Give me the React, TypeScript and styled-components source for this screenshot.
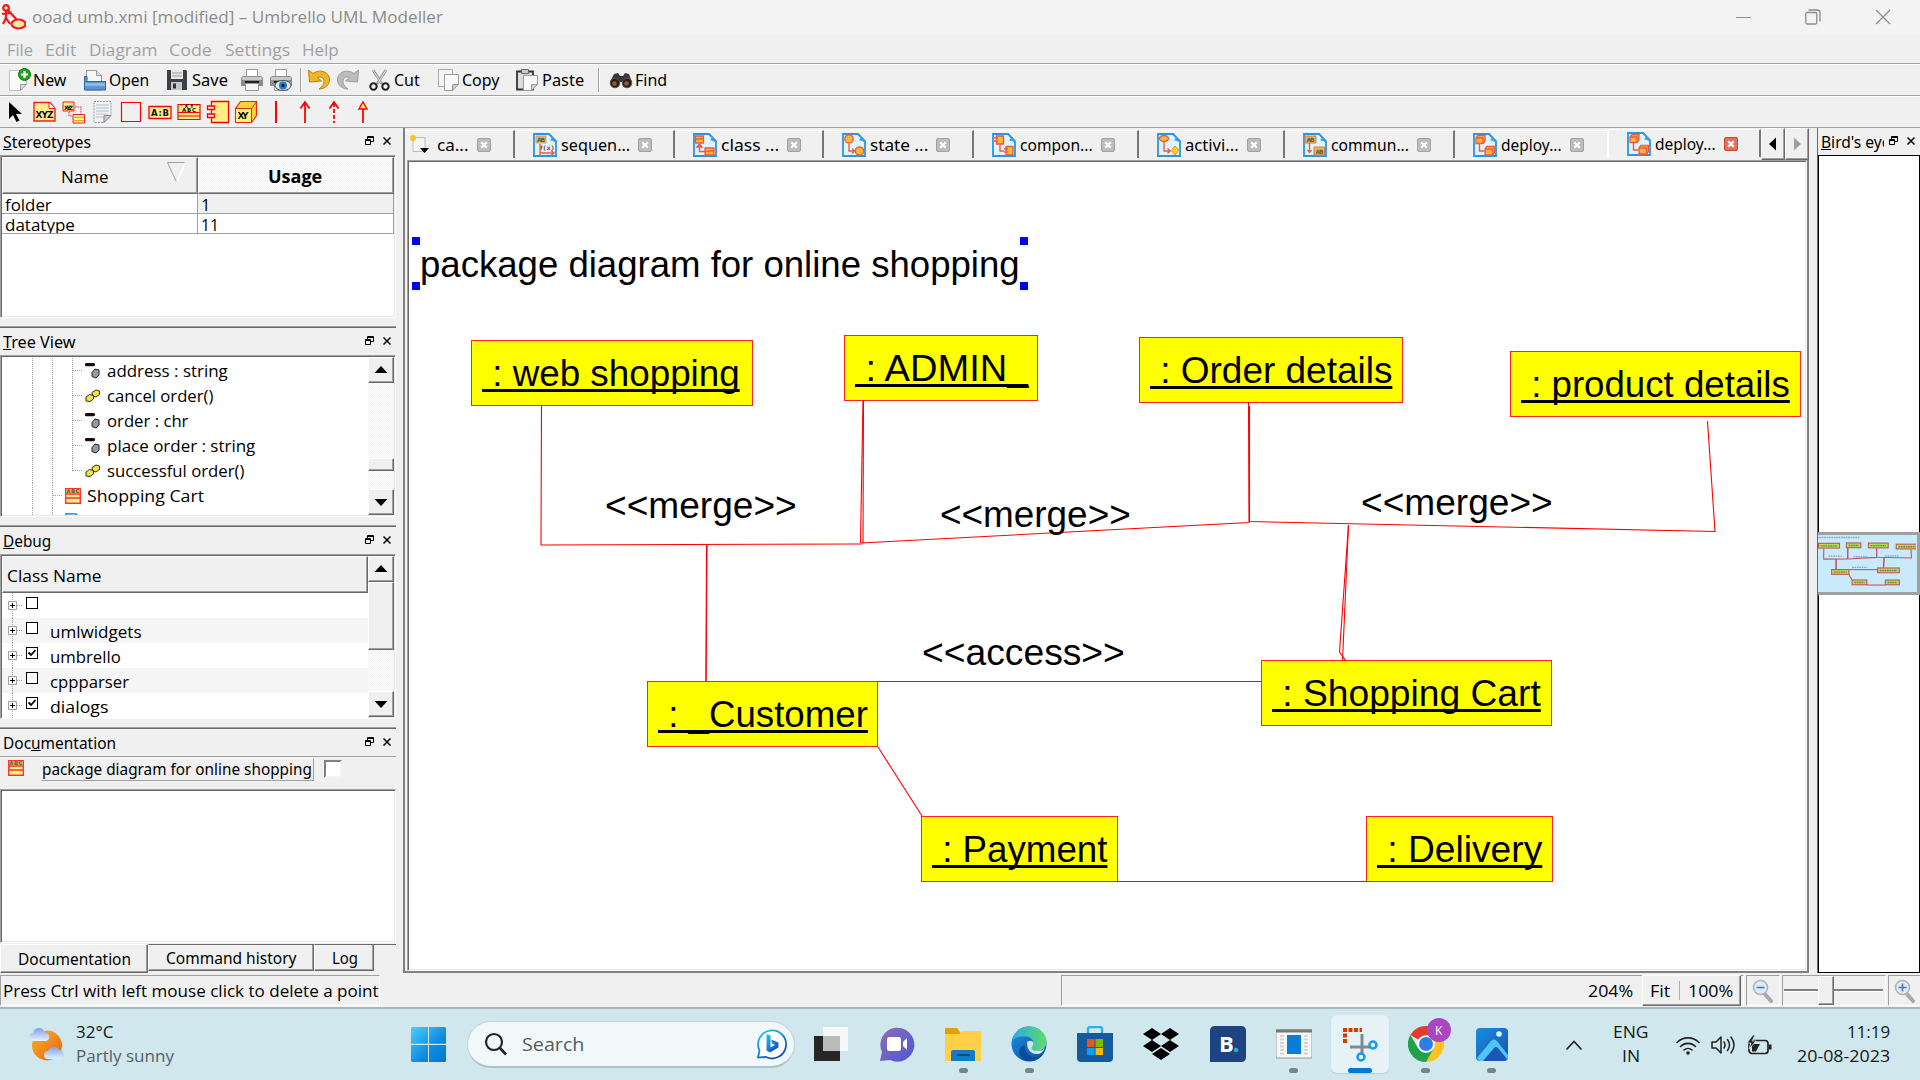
import React, { useLayoutEffect, useRef, useState } from 'react';
import styled, { createGlobalStyle, css } from 'styled-components';

const UI = '"Open Sans", "Noto Sans", sans-serif';
const TAHOMA = '"Noto Sans", "Open Sans", sans-serif';
const ARIAL = '"Liberation Sans", Arial, sans-serif';

const Global = createGlobalStyle`
  *, *::before, *::after { box-sizing: border-box; }
  html, body { margin: 0; padding: 0; overflow: hidden; }
  svg { display: block; flex: none; }
`;

/* ---------- text fitted to a known width ---------- */
const FitBox = styled.span<{ $w: number }>`
  display: block;
  flex: none;
  width: ${p => p.$w}px;
  white-space: pre;
`;
const FitInner = styled.span`
  display: inline-block;
  transform-origin: 0 50%;
  white-space: pre;
`;
function Fit({ w, children }: { w: number; children: React.ReactNode }) {
  const ref = useRef<HTMLSpanElement>(null);
  const [scale, setScale] = useState(1);
  useLayoutEffect(() => {
    if (ref.current) setScale(w / ref.current.offsetWidth);
  }, [w]);
  return (
    <FitBox $w={w}>
      <FitInner ref={ref} style={{ transform: `scaleX(${scale})` }}>{children}</FitInner>
    </FitBox>
  );
}

/* ---------- window frame ---------- */
const Screen = styled.div`
  width: 1920px;
  height: 1080px;
  display: flex;
  flex-direction: column;
  background: #f0f0f0;
  font-family: ${UI};
  font-size: 17px;
  color: #000;
  overflow: hidden;
`;
const TitleBar = styled.header`
  height: 34px;
  display: flex;
  align-items: center;
  background: #f3f3f3;
  color: #8c8c8c;
  padding-left: 2px;
`;
const TitleText = styled.div`
  margin-left: 6px;
  padding-bottom: 1px;
  flex: 1;
`;
const WindowButtons = styled.div`
  display: flex;
  gap: 54px;
  padding-right: 29px;
`;
const MenuBar = styled.nav`
  height: 30px;
  display: flex;
  align-items: center;
  gap: 12.4px;
  padding: 2px 0 0 7px;
  color: #a0a0a0;
  border-bottom: 1px solid #a0a0a0;
`;
const Toolbar = styled.div`
  height: 32px;
  display: flex;
  align-items: center;
  border-top: 1px solid #fff;
  border-bottom: 1px solid #a0a0a0;
  padding-left: 7px;
  font-family: ${TAHOMA};
  font-size: 16px;
`;
const ToolButton = styled.div<{ $gap?: number; $ml?: number }>`
  display: flex;
  align-items: center;
  gap: ${p => p.$gap ?? 4}px;
  margin-left: ${p => p.$ml ?? 0}px;
`;
const Separator = styled.div<{ $ml: number }>`
  width: 2px;
  height: 24px;
  margin-left: ${p => p.$ml}px;
  background: #a0a0a0;
  border-right: 1px solid #fff;
`;

/* ---------- docks ---------- */
const Workspace = styled.main`
  height: 845px;
  display: flex;
`;
const LeftColumn = styled.aside`
  width: 396px;
  display: flex;
  flex-direction: column;
`;
const Dock = styled.section<{ $h: number; $first?: boolean }>`
  height: ${p => p.$h}px;
  display: flex;
  flex-direction: column;
  ${p => !p.$first && css`
    border-top: 1px solid #a0a0a0;
    box-shadow: inset 0 1px #696969;
    padding-top: 1px;
  `}
`;
const DockTitleBar = styled.div`
  height: 27px;
  flex: none;
  display: flex;
  align-items: center;
  padding: 0 5px 0 3px;
  font-family: ${TAHOMA};
  font-size: 16px;
`;
const DockName = styled.div`
  flex: 1;
  min-width: 0;
  overflow: hidden;
`;
const DockControls = styled.div`
  display: flex;
  gap: 9px;
  margin: -2px 0 0 5px;
`;
const Sunken = styled.div<{ $h?: number }>`
  ${p => (p.$h ? `height: ${p.$h}px;` : 'flex: 1;')}
  background: #fff;
  border: 1px solid;
  border-color: #a0a0a0 #fff #fff #a0a0a0;
  box-shadow: inset 1px 1px #696969, inset -1px -1px #e8e8e8;
  padding: 1px;
  display: flex;
  overflow: hidden;
`;
const raised = css`
  background: #f0f0f0;
  border: 1px solid;
  border-color: #fff #696969 #696969 #fff;
  box-shadow: inset -1px -1px #a0a0a0;
`;
const HeaderCell = styled.div<{ $dither?: boolean }>`
  ${raised}
  height: 37px;
  display: flex;
  align-items: center;
  padding-top: 1px;
  ${p => p.$dither && 'background: repeating-conic-gradient(#fff 0 25%, #f0f0f0 0 50%) 0 0 / 2px 2px;'}
`;
const StereoTable = styled.div`
  width: 392px;
  height: 76px;
  display: grid;
  grid-template-columns: 196px 196px;
  grid-template-rows: 37px 20px 20px;
`;
const Cell = styled.div<{ $alt?: boolean }>`
  height: 20px;
  border-right: 1px solid #a0a0a0;
  border-bottom: 1px solid #a0a0a0;
  background: ${p => (p.$alt ? '#f0f0f0' : '#fff')};
  padding-left: 3px;
  line-height: 21px;
  overflow: hidden;
  font-size: 16.5px;
`;
const SortMark = styled.svg`
  margin-left: 58px;
  margin-top: -8px;
`;
const NameLabel = styled.div` margin-left: 58px; `;
const UsageLabel = styled.div` margin-left: 69px; font-weight: 700; font-family: ${UI}; `;

/* scroll bars */
const Track = styled.div`
  width: 26px;
  flex: none;
  display: flex;
  flex-direction: column;
  background: repeating-conic-gradient(#fff 0 25%, #f0f0f0 0 50%) 0 0 / 2px 2px;
`;
const ScrollButton = styled.div`
  ${raised}
  height: 26px;
  display: flex;
  align-items: center;
  justify-content: center;
`;
const Thumb = styled.div<{ $before: number; $h: number }>`
  ${raised}
  height: ${p => p.$h}px;
  margin-top: ${p => p.$before}px;
`;
const Spring = styled.div` flex: 1; `;

/* tree */
const Tree = styled.div`
  flex: 1;
  overflow: hidden;
  padding-top: 1px;
`;
const TreeRow = styled.div`
  height: 25px;
  display: flex;
  align-items: center;
`;
const Guide = styled.div<{ $w: number; $line?: boolean; $half?: boolean }>`
  width: ${p => p.$w}px;
  height: ${p => (p.$half ? 13 : 25)}px;
  align-self: flex-start;
  ${p => p.$line && 'background: repeating-linear-gradient(#a0a0a0 0 1px, transparent 1px 2px) 0 0 / 1px 100% no-repeat;'}
`;
const Stub = styled.div<{ $w: number; $gap: number }>`
  width: ${p => p.$w}px;
  height: 1px;
  margin-right: ${p => p.$gap}px;
  background: repeating-linear-gradient(90deg, #a0a0a0 0 1px, transparent 1px 2px);
`;
const RowText = styled.div<{ $ml: number }>`
  margin-left: ${p => p.$ml}px;
  font-size: 16.5px;
`;
const DebugList = styled.div` flex: 1; `;
const ClassHeader = styled(HeaderCell)` padding-left: 4px; `;
const DebugRow = styled.div<{ $alt?: boolean }>`
  height: 25px;
  display: flex;
  background: ${p => (p.$alt ? '#f5f5f5' : '#fff')};
`;
const Expander = styled.div`
  width: 20px;
  margin-left: 6px;
`;
const CheckBox = styled.div`
  width: 12px;
  height: 12px;
  margin: 4px 12px 0 -2px;
  border: 1px solid #000;
  background: #fff;
`;
const DebugText = styled.div`
  line-height: 27px;
  font-size: 16.5px;
`;

/* documentation */
const DocHead = styled.div`
  height: 33px;
  flex: none;
  border-top: 1px solid #a0a0a0;
  display: flex;
  align-items: flex-start;
  padding: 1px 0 0 8px;
  font-family: ${TAHOMA};
  font-size: 16px;
`;
const DocIcon = styled.div` padding-top: 2px; `;
const DocName = styled.div`
  width: 273px;
  height: 23px;
  margin-left: 17px;
  line-height: 20px;
  border: 1px solid;
  border-color: #fff #a0a0a0 #a0a0a0 #fff;
`;
const DocCheck = styled.div`
  width: 18px;
  height: 18px;
  margin: 2px 0 0 10px;
  background: #fff;
  border: 2px solid;
  border-color: #808080 #f4f4f4 #f4f4f4 #808080;
`;
const BottomTabs = styled.div`
  height: 30px;
  display: flex;
  align-items: flex-start;
  font-family: ${TAHOMA};
  font-size: 16px;
`;
const BottomTab = styled.div<{ $w: number; $pad: number; $active?: boolean }>`
  width: ${p => p.$w}px;
  height: ${p => (p.$active ? 29 : 27)}px;
  margin-top: 1px;
  padding-left: ${p => p.$pad}px;
  line-height: ${p => (p.$active ? 28 : 27)}px;
  border: 1px solid;
  border-color: ${p => (p.$active ? '#fff' : '#696969')} #696969 #696969 #fff;
  box-shadow: inset -1px -1px #a0a0a0;
`;
const TabLine = styled.div`
  flex: 1;
  height: 1px;
  margin-top: 1px;
  background: #696969;
`;

/* ---------- centre ---------- */
const Center = styled.section`
  width: 1406px;
  margin-left: 7px;
  border: solid #808080;
  border-width: 0 2px 2px 2px;
  display: flex;
  flex-direction: column;
`;
const TabStrip = styled.div`
  height: 32px;
  display: flex;
  padding-top: 3px;
  font-family: ${TAHOMA};
  font-size: 16px;
`;
const DiagramTab = styled.div<{ $w: number; $active?: boolean; $first?: boolean; $noLine?: boolean }>`
  width: ${p => p.$w}px;
  height: 28px;
  flex: none;
  margin-top: ${p => (p.$active ? -2 : -1)}px;
  display: flex;
  align-items: center;
  padding-left: ${p => (p.$first ? 4 : 18)}px;
  gap: 4px;
  border-top: 1px solid #fff;
  border-right: 2px solid ${p => (p.$noLine ? '#fff' : '#777')};
`;
const CloseBadge = styled.div<{ $hot?: boolean }>`
  width: 14px;
  height: 14px;
  margin-left: 4px;
  border-radius: 2px;
  border: 1px solid ${p => (p.$hot ? '#c8472d' : '#a2a2a2')};
  background: ${p => (p.$hot ? '#e0705c' : '#bdbdbd')};
`;
const NavButton = styled.div`
  ${raised}
  width: 24px;
  height: 32px;
  flex: none;
  margin-top: -3px;
  display: flex;
  align-items: center;
  justify-content: center;
`;
const ViewFrame = styled.div`
  flex: 1;
  display: flex;
  margin-left: 2px;
`;
const Canvas = styled.div`
  position: relative;
  flex: 1;
  background: #fff;
  overflow: hidden;
  font-family: ${ARIAL};
  font-size: 36.5px;
`;
const Node = styled.div<{ $x: number; $y: number; $w: number }>`
  position: absolute;
  left: ${p => p.$x - 409}px;
  top: ${p => p.$y - 162}px;
  width: ${p => p.$w}px;
  height: 66px;
  background: #ff0;
  border: 1px solid #f22;
  padding-left: 10px;
  line-height: 65px;
  text-decoration: underline;
  text-decoration-thickness: 2px;
  text-underline-offset: 3px;
  text-decoration-skip-ink: none;
`;
const Label = styled.div<{ $x: number; $base: number }>`
  position: absolute;
  left: ${p => p.$x - 409}px;
  top: ${p => p.$base - 162 - 33}px;
  line-height: 42px;
`;
const Handle = styled.div<{ $x: number; $y: number }>`
  position: absolute;
  left: ${p => p.$x - 409}px;
  top: ${p => p.$y - 162}px;
  width: 8px;
  height: 8px;
  background: #00f;
`;
const Links = styled.svg` position: absolute; inset: 0; `;

/* ---------- bird's eye ---------- */
const BirdDock = styled.aside`
  width: 103px;
  margin-left: 8px;
  display: flex;
  flex-direction: column;
  border-left: 1px solid #696969;
`;
const BirdView = styled.div`
  flex: 1;
  background: #fff;
  border: 1px solid #000;
  padding-top: 376px;
`;
const BirdThumb = styled.div`
  height: 63px;
  margin: 0 -1px;
  border: 3px solid #a0a0a0;
  border-left: 0;
  background: #c8eafa;
`;

/* ---------- status bar ---------- */
const StatusBar = styled.footer`
  height: 36px;
  display: flex;
  padding-top: 2px;
  border-bottom: 2px solid #a9b8bd;
`;
const StatusCell = styled.div<{ $w: number; $ml?: number; $pl?: number }>`
  width: ${p => p.$w}px;
  height: 31px;
  flex: none;
  margin-left: ${p => p.$ml ?? 0}px;
  padding-left: ${p => p.$pl ?? 0}px;
  border: 1px solid;
  border-color: #a0a0a0 #fff #fff #a0a0a0;
  display: flex;
  align-items: center;
`;
const ZoomButtons = styled.div`
  ${raised}
  width: 99px;
  height: 31px;
  margin-left: 9px;
  display: flex;
  align-items: center;
  padding-left: 7px;
`;
const ZoomDivider = styled.div`
  width: 1px;
  height: 19px;
  background: #b0b0b0;
  margin: 0 8px 0 9px;
`;
const Groove = styled.div<{ $w: number }>`
  width: ${p => p.$w}px;
  height: 3px;
  border-top: 2px solid #808080;
  border-bottom: 1px solid #fff;
`;
const SliderKnob = styled.div`
  ${raised}
  width: 16px;
  height: 29px;
`;

/* ---------- taskbar ---------- */
const Taskbar = styled.footer`
  flex: 1;
  display: flex;
  align-items: center;
  background: #cfe7ed;
  color: #15191b;
`;
const Weather = styled.div`
  width: 411px;
  display: flex;
  padding-left: 29px;
  gap: 11px;
  align-items: center;
`;
const Lines = styled.div<{ $align?: string }>`
  display: flex;
  flex-direction: column;
  align-items: ${p => p.$align ?? 'flex-start'};
  line-height: 24px;
  font-size: 16.5px;
  padding-bottom: 2px;
`;
const Muted = styled.div` color: #566166; `;
const SearchPill = styled.div`
  width: 328px;
  height: 47px;
  margin-left: 21px;
  border-radius: 24px;
  background: #f0f8fa;
  border: 1px solid #bfd5db;
  border-bottom: 2px solid #a9c3ca;
  display: flex;
  align-items: center;
  padding: 0 7px 0 16px;
  color: #555c5f;
  font-size: 17.5px;
`;
const SearchText = styled.div` margin-left: 15px; flex: 1; `;
const Apps = styled.div`
  display: flex;
  flex: none;
  margin-left: 7px;
  gap: 8.1px;
`;
const AppSlot = styled.div<{ $active?: boolean }>`
  width: 58px;
  height: 58px;
  margin-top: -1px;
  border-radius: 6px;
  display: flex;
  flex-direction: column;
  align-items: center;
  padding-top: 11px;
  ${p => p.$active && 'background: #e5f2f6; box-shadow: 0 1px 1px #b3ccd3;'}
`;
const Dot = styled.div<{ $active?: boolean }>`
  width: ${p => (p.$active ? 24 : 9)}px;
  height: 5px;
  margin-top: 6px;
  border-radius: 3px;
  background: ${p => (p.$active ? '#0078d4' : '#76868b')};
`;
const Tray = styled.div`
  flex: 1;
  display: flex;
  align-items: center;
  justify-content: flex-end;
  padding-right: 30px;
`;
const TrayLang = styled.div` margin-left: 30px; `;
const TrayIcons = styled.div`
  display: flex;
  gap: 11px;
  margin: 0 25px 0 27px;
`;

/* ---------- small drawings ---------- */
const FloatIcon = () => (
  <svg width="9" height="10" viewBox="0 0 9 10" fill="none" stroke="#000">
    <path d="M2.5 3V.5h6v5H6M2 1.5h6" /><path d="M.5 3.5h5v5h-5zM0 4.5h6" />
  </svg>
);
const CrossIcon = () => (
  <svg width="8" height="10" viewBox="0 0 8 10" stroke="#000" strokeWidth="1.5"><path d="M.5 1.5l7 7M7.5 1.5l-7 7" /></svg>
);
const Controls = () => <DockControls><FloatIcon /><CrossIcon /></DockControls>;
const Arrow = ({ d, c = '#000' }: { d: string; c?: string }) => (
  <svg width="14" height="14" viewBox="0 0 14 14"><path d={d} fill={c} /></svg>
);
const UP = 'M7 3L13.5 10H.5z', DOWN = 'M7 11L.5 4h13z', LEFT = 'M3 7l7-6.500v13z', RIGHT = 'M11 7L4 .5v13z';

const I = ({ children, w = 24, h = 24, vb }: { children: React.ReactNode; w?: number; h?: number; vb?: string }) => (
  <svg width={w} height={h} viewBox={vb ?? `0 0 ${w} ${h}`} fill="none">{children}</svg>
);
const Y = '#ffee88';

const UmbrelloIcon = () => (
  <I w={24} h={26}><g stroke="#f01818" strokeWidth="2.200"><circle cx="4" cy="4" r="2.800" fill="#ffe38a" /><path d="M4 7v8M0 10l8-1M4 14l-3 6M4 14l4 6M6 6l9 10" /><ellipse cx="16.500" cy="20" rx="7" ry="4.500" fill="#ffe9a0" /></g></I>
);
const NewIcon = () => (
  <I><path d="M2.500 2.500h17v14l-6 6h-11z" fill="#fbfbfb" stroke="#c4c4c4" /><path d="M13.500 22.500v-6h6z" fill="#ddd" stroke="#999" /><circle cx="17.500" cy="6.500" r="6" fill="#1fa31f" stroke="#0b7c0b" /><path d="M17.500 3v7M14 6.500h7" stroke="#fff" strokeWidth="2.200" /></I>
);
const OpenIcon = () => (
  <I><path d="M3.500 22V2.500h10l5 5V22z" fill="#f6f6f6" stroke="#999" /><path d="M13.500 2.500v5h5" stroke="#999" fill="#ddd" /><path d="M1.500 22V8.500h2.500v5h18.500V22z" fill="#5f94cf" stroke="#2f65a4" /><path d="M2 15h20v3H2z" fill="#8db8e4" /></I>
);
const SaveIcon = () => (
  <I><path d="M2 2h19l1 1v19H2z" fill="#3b4046" /><path d="M6 2h12v9H6z" fill="#e8e8e8" /><path d="M7 5h10M7 8h10" stroke="#999" /><path d="M6 14h11v8H6z" fill="#c3c6ca" /><path d="M8 15.500h3v5H8z" fill="#333" /></I>
);
const PrintIcon = ({ eye }: { eye?: boolean }) => (
  <I><path d="M6.500 9V1.500h11V9z" fill="#fff" stroke="#999" /><path d="M1 9.500l2-1.500h18l2 1.500V18H1z" fill="#8c8c8c" /><path d="M2 9h20v3H2z" fill="#c9c9c9" /><path d="M5 13h14v2.500H5z" fill="#222" /><path d="M5.500 15.500h13v7h-13z" fill="#f4f4f4" stroke="#999" />{eye && <><ellipse cx="14" cy="17.500" rx="8" ry="5" fill="#d9e7f2" stroke="#456" /><circle cx="14" cy="17.500" r="4" fill="#2878c0" /><circle cx="14" cy="17.500" r="1.500" fill="#012" /></>}</I>
);
const UndoIcon = ({ gray }: { gray?: boolean }) => (
  <I><g transform={gray ? 'translate(24 0) scale(-1 1)' : undefined}><path d="M1.500 2l1 12 12-1-4-3.500c3.500-1.500 6.500 0 6.500 4 0 3-2 5.500-5 7.500 6 0 10.500-4 10.500-9.500C22.500 4 13 .5 6 5.500z" fill={gray ? '#bcbcbc' : '#efb52a'} stroke={gray ? '#9c9c9c' : '#b98208'} /></g></I>
);
const CutIcon = () => (
  <I><path d="M5 2l9 14M18 2L9 16" stroke="#8f8f8f" strokeWidth="2.600" /><path d="M5 2l8 13M18 2l-8 13" stroke="#e8e8e8" strokeWidth="1" /><circle cx="5.500" cy="18.500" r="3.200" stroke="#222" strokeWidth="2" /><circle cx="17.500" cy="18.500" r="3.200" stroke="#222" strokeWidth="2" /></I>
);
const CopyIcon = () => (
  <I><path d="M1.500 1.500h14v17h-14z" fill="#f5f5f5" stroke="#a9a9a9" /><path d="M7.500 6.500h14v10l-6 6h-8z" fill="#fafafa" stroke="#9a9a9a" /><path d="M15.500 22.500v-6h6z" fill="#ccc" stroke="#999" /></I>
);
const PasteIcon = () => (
  <I><path d="M2 3.500h16v18H2z" fill="#ddd" stroke="#333" strokeWidth="1.800" /><path d="M6.500 1.500h7v4h-7z" fill="#ccc" stroke="#666" /><path d="M8.500 7.500h14v9l-6 6h-8z" fill="#fafafa" stroke="#9a9a9a" /><path d="M16.500 22.500v-6h6z" fill="#ccc" stroke="#999" /></I>
);
const FindIcon = () => (
  <I><path d="M5 6l4-1 2 3h3l2-3 4 1 3 8H1z" fill="#3c3734" /><circle cx="6" cy="15" r="4.800" fill="#26211f" stroke="#5d544e" /><circle cx="18" cy="15" r="4.800" fill="#26211f" stroke="#5d544e" /><circle cx="5.500" cy="15.500" r="2.300" fill="#a05138" /><circle cx="17.500" cy="15.500" r="2.300" fill="#a05138" /></I>
);
const Mini = styled.text<{ $soft?: boolean }>`
  font-family: "DejaVu Sans", sans-serif;
  font-weight: 700;
  fill: ${p => (p.$soft ? '#6b5c35' : '#111')};
`;

const PointerIcon = () => <I><path d="M5 2v17l4-4 3.500 7 3-1.500-3.500-6.500h6z" fill="#000" /></I>;
const NoteXyz = () => <I><path d="M1 2.500h16l5 6v12.500H1z" fill={Y} stroke="#f02020" strokeWidth="1.400" /><path d="M16 2.500v6h6" fill="#fff" stroke="#f02020" /><Mini x="2.500" y="18" fontSize="9" textLength="18">XYZ</Mini></I>;
const ClassXyz = () => <I><path d="M1 2h11v9H1zM11 14.500h11.500v8.500H11z" fill={Y} stroke="#f02020" /><Mini x="2" y="9.500" fontSize="6" textLength="9">XYZ</Mini><path d="M11 17.500h11M11 20.500h11" stroke="#f0a040" /><path d="M13 7h6v7M7 12v4h4" stroke="#f02020" strokeDasharray="1.500 1" /></I>;
const SheetIcon = () => <I><path d="M4 1.500h17v14l-7 7H4z" fill="#f0f2f4" stroke="#999" strokeDasharray="2 1" /><path d="M6 5h13M6 8h13M6 11h13M6 14h12M6 17h8" stroke="#b9bec6" /><path d="M14 22.500v-7h7z" fill="#ccc" stroke="#888" /></I>;
const RectIcon = () => <I><path d="M2.500 2.500h19v19h-19z" stroke="#f00" strokeWidth="1.200" /></I>;
const AbIcon = () => <I><path d="M1 6.500h22v12H1z" fill={Y} stroke="#f00" strokeWidth="1.300" /><Mini x="3" y="15.500" fontSize="8.500" textLength="18">A:B</Mini></I>;
const AbcIcon = () => <I><path d="M1 4.500h22v15H1zM1 12.500h22M1 16h22" fill={Y} stroke="#f00" strokeWidth="1.200" /><Mini x="3" y="8" fontSize="5" textLength="18">"XY"</Mini><Mini x="5" y="12" fontSize="5.500" textLength="14">ABC</Mini></I>;
const ComponentIcon = () => <I><path d="M5.500 1.500h17v21h-17z" fill={Y} stroke="#f00" strokeWidth="1.300" /><path d="M1.500 6h7v3.500h-7zM1.500 14h7v3.500h-7z" fill="#fff" stroke="#f00" strokeWidth="1.300" /></I>;
const CubeIcon = () => <I><path d="M1.500 8.500l5-7h16v14l-5 7h-16z" fill="#ffd23a" stroke="#d83010" strokeWidth="1.200" /><path d="M1.500 8.500h16v14h-16z" fill="#fff27a" stroke="#d83010" /><path d="M17.500 8.500l5-7" stroke="#d83010" /><Mini x="3.500" y="19" fontSize="9" textLength="11">XY</Mini></I>;
const LineIcon = () => <I w={12}><path d="M6 1v22" stroke="#f00" strokeWidth="2" /></I>;
const ArrowIcon = ({ dash, tri }: { dash?: boolean; tri?: boolean }) => (
  <I w={12}><path d="M6 3v20" stroke="#f00" strokeWidth="1.800" strokeDasharray={dash ? '4 2' : undefined} />{tri ? <path d="M6 2l4 7H2z" fill="#fff27a" stroke="#f00" strokeWidth="1.400" /> : <path d="M1.500 8.500L6 2l4.500 6.500" stroke="#f00" strokeWidth="1.800" />}</I>
);

const ClassIcon = () => <I w={16} h={16}><path d="M.7.7h14.600v14.600H.7z" fill={Y} stroke="#f33" strokeWidth="1.400" /><path d="M1 1h14v4H1z" fill="#c9b45b" /><Mini $soft x="1.500" y="5" fontSize="5" textLength="13">ABC</Mini><path d="M1 6h14M1 10h14" stroke="#f33" strokeWidth="1.300" /></I>;
const AttrIcon = () => <I w={16} h={16}><path d="M1.500 1.600h7" stroke="#180808" strokeWidth="3.200" strokeLinecap="round" /><path d="M7 9.500l3-3.500 4 1v5l-3 3-4-1.500z" fill="#9a98a8" stroke="#222" /></I>;
const OpIcon = () => <I w={16} h={16}><path d="M7 4.500L11 2l3.500 1v3.500L11 9 7.500 8z" fill="#f2e04a" stroke="#3a3200" /><path d="M1 9l3.500-2.500 4 1V11L5 13.500 1 13z" fill="#f2e04a" stroke="#3a3200" /></I>;

function DiagramIcon({ kind }: { kind: string }) {
  const box = { fill: '#f6b73c', stroke: '#ee5a3a', strokeWidth: 1.3 };
  const pink = { stroke: '#ee5a4a', strokeWidth: 1.4 };
  return (
    <I>
      <path d="M1 1h15l7 7v15H1z" fill="#e3f3fc" stroke="#2b95e4" strokeWidth="1.800" />
      <path d="M14 .5c5 0 6 4 3 7 3 0 6 1 6 4V8l-6-7.500z" fill="#2f9fec" />
      {kind === 'sequence' && <><path d="M3 3h10v7H3z" fill="#d9bd63" stroke="#c98" /><Mini $soft x="4" y="9" fontSize="6" textLength="8">AB</Mini><Mini $soft x="7" y="17" fontSize="6" textLength="14">f(x)</Mini><path d="M7 11v11M7 20h14M18 17.500l3 2.500-3 2.500" {...pink} /></>}
      {kind === 'class' && <><path d="M2.500 3h8v7h-8zM12 15h9v7h-9z" {...box} /><path d="M3 6h8M12 18h9M6.500 11v7.500H12M4 14l2.500-3L9 14z" {...pink} /></>}
      {kind === 'state' && <><circle cx="7" cy="6" r="4.200" {...box} /><circle cx="17.500" cy="18" r="4.200" {...box} /><path d="M7 11v7h5M10 15.500l2.500 2.500-2.500 2.500" {...pink} /></>}
      {kind === 'component' && <><path d="M4.500 3h7v8h-7zM14 13.500h7V22h-7z" {...box} /><path d="M2 5h4M2 8h4M12 16h4M12 19h4M8 11v7h4" {...pink} /></>}
      {kind === 'activity' && <><ellipse cx="7" cy="5.500" rx="4.500" ry="3" {...box} /><path d="M18 13l4 4.500-4 4.500-4-4.500z" fill="#ffd21c" stroke="#f58a1c" /><path d="M7 9v9h5.500M10.500 15.500L13 18l-2.500 2.500" {...pink} /></>}
      {kind === 'communication' && <><path d="M2 3h11v7H2zM11 14h10.500v8H11z" fill="#d9bd63" stroke="#d87850" /><Mini $soft x="3.500" y="9" fontSize="6" textLength="8">AB</Mini><Mini $soft x="12.500" y="20.500" fontSize="6" textLength="8">AB</Mini><path d="M6.500 10v9M4.500 17l2 2.500L8.500 17" {...pink} /></>}
      {kind === 'deploy' && <><path d="M3 5l2-2.500h7V8l-2 2.500H3zM12 16l2-2.500h7.500v6l-2 2.500H12z" {...box} /><path d="M6.500 11v7h5M3 5h7v5M12 16h7.500v6" {...pink} /></>}
    </I>
  );
}
const CloseX = ({ hot }: { hot?: boolean }) => (
  <CloseBadge $hot={hot}><svg width="12" height="12" viewBox="0 0 12 12" stroke="#fff" strokeWidth="2.200"><path d="M3.200 3.200l5.600 5.600M8.800 3.200L3.200 8.800" /></svg></CloseBadge>
);
const Magnifier = ({ plus }: { plus?: boolean }) => (
  <I w={24} h={24}><path d="M13 14l7 8" stroke="#a9a9a9" strokeWidth="4" strokeLinecap="round" /><circle cx="9.500" cy="8.500" r="7" fill="#dfeaf8" stroke="#a9b6c6" strokeWidth="1.600" /><path d={plus ? 'M5.500 8.500h8M9.500 4.500v8' : 'M5.500 8.500h8'} stroke="#5577a8" strokeWidth="1.600" /></I>
);

/* taskbar drawings */
const WeatherIcon = () => (
  <svg width="36" height="36" viewBox="0 0 36 36"><defs><linearGradient id="sun" x1="0" y1="0" x2="1" y2="1"><stop offset="0" stopColor="#f5b52a" /><stop offset="1" stopColor="#ef5f10" /></linearGradient><linearGradient id="cl" x1="0" y1="0" x2="0" y2="1"><stop offset="0" stopColor="#7f9fe6" /><stop offset="1" stopColor="#e8f0ff" /></linearGradient></defs>
    <circle cx="18" cy="18.500" r="15" fill="url(#sun)" />
    <path d="M4 14a4.200 4.200 0 010-8.300A6 6 0 0115.500 5 4.600 4.600 0 0117 14z" fill="url(#cl)" />
    <path d="M19 32a4 4 0 010-8 6 6 0 0111-1 4.600 4.600 0 011.500 9z" fill="url(#cl)" /></svg>
);
const StartIcon = () => (
  <svg width="35" height="35" viewBox="0 0 35 35"><defs><linearGradient id="st" x1="0" y1="0" x2="1" y2="1"><stop offset="0" stopColor="#4cd0ff" /><stop offset=".6" stopColor="#0f8ae0" /><stop offset="1" stopColor="#0078d4" /></linearGradient></defs><path d="M1 0h16v16.800H0V1zM18 0h16l1 1v15.800H18zM0 18h17v17H1l-1-1zM18 18h17v16l-1 1H18z" fill="url(#st)" /></svg>
);
const BingIcon = () => (
  <svg width="31" height="32" viewBox="0 0 31 32" fill="none"><defs><linearGradient id="bg" x1="0" y1="0" x2=".6" y2="1"><stop offset="0" stopColor="#28c8ee" /><stop offset="1" stopColor="#1450c8" /></linearGradient></defs><path d="M2 29.500l1.500-7A14 14 0 1110 29z" fill="#fff" stroke="url(#bg)" strokeWidth="1.800" /><path d="M10.500 6l4 1.500v12l4.500-2.500-3-1.500-1-4 7.500 3v5L14 24.500l-3.500-2z" fill="url(#bg)" /></svg>
);
const ap = (children: React.ReactNode) => <svg width="36" height="36" viewBox="0 0 36 36" fill="none">{children}</svg>;
const TaskView = () => ap(<><path d="M1 10h26v25H1z" fill="#262626" /><path d="M10 1h25v24H10z" fill="#f8f8f8" fillOpacity=".95" /><path d="M10 10h17v15H10z" fill="#bbb" /></>);
const Chat = () => ap(<><defs><linearGradient id="ch" x1="0" y1="0" x2="1" y2="1"><stop offset="0" stopColor="#8a6fb5" /><stop offset="1" stopColor="#4f55d8" /></linearGradient></defs><path d="M1 35l2-9A17 17 0 1111 34z" fill="url(#ch)" /><rect x="8" y="11" width="14" height="14" rx="2.500" fill="#fff" /><path d="M24 16l4-4v12l-4-4z" fill="#fff" /></>);
const Explorer = () => ap(<><path d="M0 3q0-1 1-1h11l3 4v5H0z" fill="#e2a100" /><path d="M0 8h14l3-3h18q1 0 1 1v29H0z" fill="#ffcf48" /><path d="M6 35V26q0-2 2-2h20q2 0 2 2v9z" fill="#0f7cc4" /><path d="M12 29h13" stroke="#0a4a80" strokeWidth="2" /></>);
const Edge = () => ap(<><defs><linearGradient id="e1" x1="0" y1="0" x2="1" y2="0"><stop offset="0" stopColor="#2aa8e8" /><stop offset="1" stopColor="#5fdc6a" /></linearGradient><linearGradient id="e2" x1="0" y1="0" x2="1" y2="1"><stop offset="0" stopColor="#1a8fe0" /><stop offset="1" stopColor="#0c4fa0" /></linearGradient></defs><circle cx="18" cy="18" r="17.500" fill="url(#e2)" /><path d="M1 15C3 5 10 .5 18 .5c10 0 17.500 7 17.500 15 0 7-5 9.500-9 9.500-4 0-6-1.500-6-3 0-1 2-2 2-5 0-4-4-6.500-9-6.500C8 10.500 3 12 1 15z" fill="url(#e1)" /><path d="M14 19c-1 8 5 13 13 12l5-3c-4 7-14 10-21 4-5-5-3-12 3-13z" fill="#0b4a9c" /><path d="M16 17c0-3 6-3 6.500 0 0 3-2 4-2 5 0 1.500 2 3 6 3 3 0 6-1 7-3-1 4-4 6-8 6-6 0-9.500-5-9.500-11z" fill="#cfe7ed" /></>);
const Store = () => ap(<><path d="M11 8V3q0-2 2-2h10q2 0 2 2v5" stroke="#28b4ee" strokeWidth="2.400" /><path d="M0 7h36v25q0 4-4 4H4q-4 0-4-4z" fill="#175a9c" /><path d="M10 13h7.500v8H10z" fill="#f25022" /><path d="M18.500 13H26v8h-7.500z" fill="#7fba00" /><path d="M10 22h7.500v7H10z" fill="#00a4ef" /><path d="M18.500 22H26v7h-7.500z" fill="#ffb900" /></>);
const Dropbox = () => ap(<path d="M9 2l9 6-9 6-9-6zM27 2l9 6-9 6-9-6zM9 14l9 6-9 6-9-6zM27 14l9 6-9 6-9-6zM18 22l9 6-9 6-9-6z" fill="#000" />);
const BookText = styled.text` font-family: ${UI}; font-weight: 700; fill: #fff; `;
const Booking = () => ap(<><path d="M0 5q0-5 5-5h26q5 0 5 5v26q0 5-5 5H0z" fill="#1d4380" /><BookText x="9" y="26" fontSize="22">B</BookText><circle cx="26" cy="24" r="2.200" fill="#18aef0" /></>);
const WindowApp = () => ap(<><path d="M0 4h36v28H0z" fill="#f7f7f7" stroke="#999" /><path d="M0 3.500h36v3H0z" fill="#777" /><path d="M11 9h14v19H11z" fill="#0a7ed6" /><path d="M6 9v20M30 9v20" stroke="#d4d4d4" strokeWidth="4" strokeDasharray="2 1.500" /></>);
const Snip = () => ap(<><path d="M3 17V4h17" stroke="#d83b01" strokeWidth="4" strokeDasharray="4 1.500" /><path d="M20 8v19M8 21h20" stroke="#7e8a90" strokeWidth="3" /><circle cx="31" cy="19" r="3.500" stroke="#1b9be8" strokeWidth="2.500" /><circle cx="19" cy="31" r="3.500" stroke="#1b9be8" strokeWidth="2.500" /></>);
const Badge = styled.text` font-family: ${UI}; font-size: 12px; fill: #fff; `;
const Chrome = () => (
  <svg width="44" height="44" viewBox="0 0 44 44"><path d="M18 26L2.400 17A18 18 0 0133.600 17H18z" fill="#e33b2e" /><path d="M18 17H33.600A18 18 0 0118 44l8-13.500z" fill="#fcc31e" /><path d="M2.400 17A18 18 0 0018 44l8-14-8 5-8-5z" fill="#22a04a" /><circle cx="18" cy="26" r="8.800" fill="#fff" /><circle cx="18" cy="26" r="7" fill="#2f7de9" /><circle cx="31" cy="12" r="12" fill="#ab47bc" /><Badge x="27" y="16.500">K</Badge></svg>
);
const ChromeWrap = styled.div` margin: -8px 0 0 8px; `;
const Photos = () => ap(<><defs><linearGradient id="ph" x1="0" y1="0" x2="1" y2="1"><stop offset="0" stopColor="#1590e0" /><stop offset="1" stopColor="#1a4fae" /></linearGradient></defs><rect x="2" y="2" width="32" height="33" rx="4" fill="url(#ph)" /><path d="M3 32L17 15q3-3 6 0l11 14v2q0 4-4 4H6q-2 0-3-3z" fill="#4fc4f7" /><path d="M9 35L20 22q2-2 4 0l9 11q-1 2-3 2z" fill="#1c56b4" /><circle cx="25" cy="8" r="2.800" fill="#dff4ff" /></>);

/* ---------- diagram data ---------- */
const nodes = [
  { x: 471, y: 340, w: 282, t: ' : web shopping', tw: 258 },
  { x: 844, y: 335, w: 194, t: ' : ADMIN_', tw: 173 },
  { x: 1139, y: 337, w: 264, t: ' : Order details', tw: 242 },
  { x: 1510, y: 351, w: 291, t: ' : product details', tw: 269 },
  { x: 647, y: 681, w: 231, t: ' : _Customer', tw: 210 },
  { x: 1261, y: 660, w: 291, t: ' : Shopping Cart', tw: 269 },
  { x: 921, y: 816, w: 197, t: ' : Payment', tw: 175 },
  { x: 1366, y: 816, w: 187, t: ' : Delivery', tw: 165 },
];
const labels = [
  { x: 605, b: 518, t: '<<merge>>', w: 192 },
  { x: 940, b: 527, t: '<<merge>>', w: 191 },
  { x: 1361, b: 515, t: '<<merge>>', w: 192 },
  { x: 922, b: 665, t: '<<access>>', w: 203 },
  { x: 420, b: 277, t: 'package diagram for online shopping', w: 600 },
];
const wires = [
  'M541.5 406L541 545L862 544', 'M863.5 400L863 543.5', 'M863 400L860.5 543',
  'M861 543L1249 522.5L1248.5 402', 'M1249.5 406V521.5L1715 531.5L1707.5 421',
  'M707 545L706 681', 'M706.5 545L706 681', 'M1348.5 525L1339.5 652L1346 661', 'M1348.5 525L1342.5 661',
  'M878 681.5H1261', 'M878 747L922 816', 'M1118 881.5H1366',
];
const tabs = [
  { w: 110, t: 'ca...', tw: 32, k: '' }, { w: 160, t: 'sequen...', tw: 69, k: 'sequence' },
  { w: 149, t: 'class ...', tw: 58, k: 'class' }, { w: 150, t: 'state ...', tw: 58, k: 'state' },
  { w: 165, t: 'compon...', tw: 73, k: 'component' }, { w: 146, t: 'activi...', tw: 54, k: 'activity' },
  { w: 170, t: 'commun...', tw: 78, k: 'communication' }, { w: 154, t: 'deploy...', tw: 61, k: 'deploy' },
  { w: 152, t: 'deploy...', tw: 61, k: 'deploy' },
];
const treeRows: [string, number, boolean][] = [
  ['address : string', 121, false], ['cancel order()', 106, true], ['order : chr', 81, false],
  ['place order : string', 148, false], ['successful order()', 137, true],
];
const debugRows: [string, number, boolean][] = [
  ['', 0, false], ['umlwidgets', 92, false], ['umbrello', 71, true], ['cppparser', 79, false], ['dialogs', 58, true],
];

export default function App() {
  return (
    <Screen>
      <Global />
      <TitleBar>
        <UmbrelloIcon />
        <TitleText><Fit w={411}>ooad umb.xmi [modified] – Umbrello UML Modeller</Fit></TitleText>
        <WindowButtons>
          <I w={16} h={16}><path d="M1 8.500h15" stroke="#8c8c8c" /></I>
          <I w={16} h={16}><rect x=".8" y="3.500" width="11" height="11.500" rx="1.500" stroke="#8c8c8c" strokeWidth="1.300" /><path d="M3.500 1h9q2.500 0 2.500 2.500v9" stroke="#8c8c8c" strokeWidth="1.300" /></I>
          <I w={16} h={16}><path d="M1 1l14 14M15 1L1 15" stroke="#8c8c8c" strokeWidth="1.200" /></I>
        </WindowButtons>
      </TitleBar>
      <MenuBar>
        <Fit w={26}>File</Fit><Fit w={31}>Edit</Fit><Fit w={68}>Diagram</Fit><Fit w={43}>Code</Fit><Fit w={65}>Settings</Fit><Fit w={37}>Help</Fit>
      </MenuBar>
      <Toolbar>
        <ToolButton $gap={2}><NewIcon /><Fit w={33}>New</Fit></ToolButton>
        <ToolButton $gap={2} $ml={17}><OpenIcon /><Fit w={40}>Open</Fit></ToolButton>
        <ToolButton $gap={3} $ml={16}><SaveIcon /><Fit w={36}>Save</Fit></ToolButton>
        <ToolButton $ml={12}><PrintIcon /></ToolButton>
        <ToolButton $ml={5}><PrintIcon eye /></ToolButton>
        <Separator $ml={7} />
        <ToolButton $ml={5}><UndoIcon /></ToolButton>
        <ToolButton $ml={5}><UndoIcon gray /></ToolButton>
        <ToolButton $ml={8} $gap={2}><CutIcon /><Fit w={26}>Cut</Fit></ToolButton>
        <ToolButton $ml={17} $gap={1}><CopyIcon /><Fit w={37}>Copy</Fit></ToolButton>
        <ToolButton $ml={16} $gap={3}><PasteIcon /><Fit w={42}>Paste</Fit></ToolButton>
        <Separator $ml={14} />
        <ToolButton $ml={9} $gap={2}><FindIcon /><Fit w={32}>Find</Fit></ToolButton>
      </Toolbar>
      <Toolbar>
        <ToolButton $gap={4.8} $ml={-3}>
          <PointerIcon /><NoteXyz /><ClassXyz /><SheetIcon /><RectIcon /><AbIcon /><AbcIcon /><ComponentIcon /><CubeIcon />
        </ToolButton>
        <ToolButton $gap={17} $ml={12}><LineIcon /><ArrowIcon /><ArrowIcon dash /><ArrowIcon tri /></ToolButton>
      </Toolbar>

      <Workspace>
        <LeftColumn>
          <Dock $h={198} $first>
            <DockTitleBar><DockName><Fit w={88}><u>S</u>tereotypes</Fit></DockName><Controls /></DockTitleBar>
            <Sunken $h={163}>
              <StereoTable>
                <HeaderCell>
                  <NameLabel><Fit w={48}>Name</Fit></NameLabel>
                  <SortMark width="19" height="21" viewBox="0 0 19 21" fill="none"><path d="M18.5.5H.5L9.5 20" stroke="#a0a0a0" /><path d="M18.5.5L10 20" stroke="#fff" strokeWidth="1.500" /></SortMark>
                </HeaderCell>
                <HeaderCell $dither><UsageLabel><Fit w={54}>Usage</Fit></UsageLabel></HeaderCell>
                <Cell><Fit w={47}>folder</Fit></Cell><Cell $alt><Fit w={9}>1</Fit></Cell>
                <Cell><Fit w={70}>datatype</Fit></Cell><Cell><Fit w={18}>11</Fit></Cell>
              </StereoTable>
            </Sunken>
          </Dock>

          <Dock $h={199}>
            <DockTitleBar><DockName><Fit w={73}><u>T</u>ree View</Fit></DockName><Controls /></DockTitleBar>
            <Sunken $h={162}>
              <Tree>
                {treeRows.map(([t, w, op], i) => (
                  <TreeRow key={t}>
                    <Guide $w={30} /><Guide $w={20} $line /><Guide $w={20} $line /><Guide $w={1} $line $half={i === 4} />
                    <Stub $w={9} $gap={3} />
                    {op ? <OpIcon /> : <AttrIcon />}
                    <RowText $ml={6}><Fit w={w}>{t}</Fit></RowText>
                  </TreeRow>
                ))}
                <TreeRow>
                  <Guide $w={30} /><Guide $w={20} $line /><Guide $w={1} $line />
                  <Stub $w={9} $gap={3} /><ClassIcon /><RowText $ml={6}><Fit w={117}>Shopping Cart</Fit></RowText>
                </TreeRow>
                <TreeRow>
                  <Guide $w={30} /><Guide $w={20} $line /><Guide $w={1} $line />
                  <Stub $w={9} $gap={3} />
                  <I w={16} h={16} vb="0 0 24 24"><path d="M1 1h15l7 7v15H1z" fill="#e3f3fc" stroke="#2b95e4" strokeWidth="2.500" /><circle cx="8" cy="8" r="5" fill="#f6b73c" stroke="#ee5a3a" /></I>
                  <RowText $ml={6}><Fit w={108}>state diagram</Fit></RowText>
                </TreeRow>
              </Tree>
              <Track>
                <ScrollButton><Arrow d={UP} /></ScrollButton>
                <Thumb $before={75} $h={13} />
                <Spring />
                <ScrollButton><Arrow d={DOWN} /></ScrollButton>
              </Track>
            </Sunken>
          </Dock>

          <Dock $h={202}>
            <DockTitleBar><DockName><Fit w={48}><u>D</u>ebug</Fit></DockName><Controls /></DockTitleBar>
            <Sunken $h={165}>
              <DebugList>
                <ClassHeader><Fit w={95}>Class Name</Fit></ClassHeader>
                {debugRows.map(([t, w, on], i) => (
                  <DebugRow key={i} $alt={i % 2 === 1}>
                    <Expander>
                      <svg width="16" height="25" viewBox="0 0 16 25" fill="none"><path d="M4.500 0v25M9 12.500h6" stroke="#a0a0a0" strokeDasharray="1 1" /><path d="M.5 8.500h8v8h-8z" fill="#fff" stroke="#a0a0a0" /><path d="M2 12.500h5M4.500 10v5" stroke="#000" /></svg>
                    </Expander>
                    <CheckBox>{on && <svg width="10" height="10" viewBox="0 0 10 10"><path d="M1.500 4.500L4 7l4.500-5" fill="none" stroke="#000" strokeWidth="1.800" /></svg>}</CheckBox>
                    <DebugText>{t && <Fit w={w}>{t}</Fit>}</DebugText>
                  </DebugRow>
                ))}
              </DebugList>
              <Track>
                <ScrollButton><Arrow d={UP} /></ScrollButton>
                <Thumb $before={0} $h={68} />
                <Spring />
                <ScrollButton><Arrow d={DOWN} /></ScrollButton>
              </Track>
            </Sunken>
          </Dock>

          <Dock $h={216}>
            <DockTitleBar><DockName><Fit w={113}>Doc<u>u</u>mentation</Fit></DockName><Controls /></DockTitleBar>
            <DocHead>
              <DocIcon><ClassIcon /></DocIcon>
              <DocName><Fit w={270}>package diagram for online shopping</Fit></DocName>
              <DocCheck />
            </DocHead>
            <Sunken />
          </Dock>
          <BottomTabs>
            <BottomTab $w={148} $pad={17} $active><Fit w={113}>Documentation</Fit></BottomTab>
            <BottomTab $w={166} $pad={17}><Fit w={130}>Command history</Fit></BottomTab>
            <BottomTab $w={60} $pad={17}><Fit w={26}>Log</Fit></BottomTab>
            <TabLine />
          </BottomTabs>
        </LeftColumn>

        <Center>
          <TabStrip>
            {tabs.map((t, i) => (
              <DiagramTab key={i} $w={t.w} $first={i === 0} $active={i === 8} $noLine={i === 7}>
                {t.k ? <DiagramIcon kind={t.k} /> : <I><path d="M4 4.500h12v14H4z" fill="#f4f4f4" stroke="#bbb" /><circle cx="4" cy="5" r="3" fill="#f7c52a" /><path d="M11 15h9l-4.500 5z" fill="#000" /></I>}
                <Fit w={t.tw}>{t.t}</Fit>
                <CloseX hot={i === 8} />
              </DiagramTab>
            ))}
            <NavButton><Arrow d={LEFT} /></NavButton>
            <NavButton><Arrow d={RIGHT} c="#a0a0a0" /></NavButton>
          </TabStrip>
          <ViewFrame>
            <Sunken>
              <Canvas>
                {nodes.map(n => (
                  <Node key={n.t} $x={n.x} $y={n.y} $w={n.w}><Fit w={n.tw}><u>{n.t}</u></Fit></Node>
                ))}
                <Links width="1397" height="808" viewBox="409 162 1397 808" fill="none" stroke="#f00" strokeWidth="1.100">
                  {wires.map(d => <path key={d} d={d} />)}
                </Links>
                {labels.map((l, i) => (
                  <Label key={i} $x={l.x} $base={l.b}><Fit w={l.w}>{l.t}</Fit></Label>
                ))}
                <Handle $x={412} $y={237} /><Handle $x={1020} $y={237} />
                <Handle $x={412} $y={282} /><Handle $x={1020} $y={282} />
              </Canvas>
            </Sunken>
          </ViewFrame>
        </Center>

        <BirdDock>
          <DockTitleBar><DockName><Fit w={106}><u>B</u>ird's eye view</Fit></DockName><Controls /></DockTitleBar>
          <BirdView>
            <BirdThumb>
              <svg width="98" height="57" viewBox="465 232 1310 740" preserveAspectRatio="none">
                <g fill="none" stroke="#c8505e" strokeWidth="14">{wires.map(d => <path key={d} d={d} />)}</g>
                {nodes.map(n => <rect key={n.t} x={n.x} y={n.y} width={n.w} height="62" fill="#b5dc5a" stroke="#c8505e" strokeWidth="14" />)}
                {nodes.map(n => <path key={n.t} d={`M${n.x + 30} ${n.y + 33}h${n.w - 60}`} stroke="#6d8c3a" strokeWidth="18" strokeDasharray="24 8" />)}
                {labels.map((l, i) => <path key={i} d={`M${l.x} ${l.b - 12}h${l.w}`} stroke="#7fa9c8" strokeWidth="18" strokeDasharray="22 10" />)}
              </svg>
            </BirdThumb>
          </BirdView>
        </BirdDock>
      </Workspace>

      <StatusBar>
        <StatusCell $w={380} $pl={2}><Fit w={376}>Press Ctrl with left mouse click to delete a point</Fit></StatusCell>
        <StatusCell $w={683} $ml={681} $pl={526}>
          <Fit w={45}>204%</Fit>
          <ZoomButtons><Fit w={20}>Fit</Fit><ZoomDivider /><Fit w={45}>100%</Fit></ZoomButtons>
        </StatusCell>
        <StatusCell $w={34} $ml={2} $pl={4}><Magnifier /></StatusCell>
        <StatusCell $w={104} $ml={2} $pl={1}><Groove $w={34} /><SliderKnob /><Groove $w={49} /></StatusCell>
        <StatusCell $w={34} $ml={2} $pl={4}><Magnifier plus /></StatusCell>
      </StatusBar>

      <Taskbar>
        <Weather><WeatherIcon /><Lines><Fit w={37}>32°C</Fit><Muted><Fit w={98}>Partly sunny</Fit></Muted></Lines></Weather>
        <StartIcon />
        <SearchPill>
          <I w={23} h={24}><circle cx="10" cy="10" r="8" stroke="#222" strokeWidth="2.200" /><path d="M16 16l6 6.500" stroke="#222" strokeWidth="2.600" /></I>
          <SearchText><Fit w={62}>Search</Fit></SearchText>
          <BingIcon />
        </SearchPill>
        <Apps>
          <AppSlot><TaskView /></AppSlot>
          <AppSlot><Chat /></AppSlot>
          <AppSlot><Explorer /><Dot /></AppSlot>
          <AppSlot><Edge /><Dot /></AppSlot>
          <AppSlot><Store /></AppSlot>
          <AppSlot><Dropbox /></AppSlot>
          <AppSlot><Booking /></AppSlot>
          <AppSlot><WindowApp /><Dot /></AppSlot>
          <AppSlot $active><Snip /><Dot $active /></AppSlot>
          <AppSlot><ChromeWrap><Chrome /></ChromeWrap><Dot /></AppSlot>
          <AppSlot><Photos /><Dot /></AppSlot>
        </Apps>
        <Tray>
          <I w={18} h={12}><path d="M1.500 10.500L9 2.500l7.500 8" stroke="#222" strokeWidth="1.700" /></I>
          <TrayLang><Lines $align="center"><Fit w={36}>ENG</Fit><Fit w={18}>IN</Fit></Lines></TrayLang>
          <TrayIcons>
            <I w={24} h={20}><g stroke="#222" strokeWidth="1.600" strokeLinecap="round"><path d="M1 7.500a15.500 15.500 0 0122 0M4.500 11.500a10.500 10.500 0 0115 0M8 15a6 6 0 018 0" /></g><circle cx="12" cy="18" r="1.800" fill="#222" /></I>
            <I w={25} h={20}><path d="M1 7h4l5-5v16l-5-5H1z" stroke="#222" strokeWidth="1.500" strokeLinejoin="round" /><path d="M13 7q2 3 0 6M16.500 4.500q4 5.500 0 11M20 2q6 8 0 16" stroke="#222" strokeWidth="1.500" strokeLinecap="round" /></I>
            <I w={25} h={20}><rect x="2" y="5.500" width="19" height="13" rx="3" stroke="#222" strokeWidth="1.700" /><path d="M22 9.500h2.500v5H22z" fill="#222" /><path d="M5 16.500V9h8l-4 7.500z" fill="#222" /><path d="M6 0L0 8h4l-2 6 7-8H5l3-6z" fill="#222" stroke="#cfe7ed" strokeWidth=".8" /></I>
          </TrayIcons>
          <Lines $align="flex-end"><Fit w={43}>11:19</Fit><Fit w={93}>20-08-2023</Fit></Lines>
        </Tray>
      </Taskbar>
    </Screen>
  );
}
